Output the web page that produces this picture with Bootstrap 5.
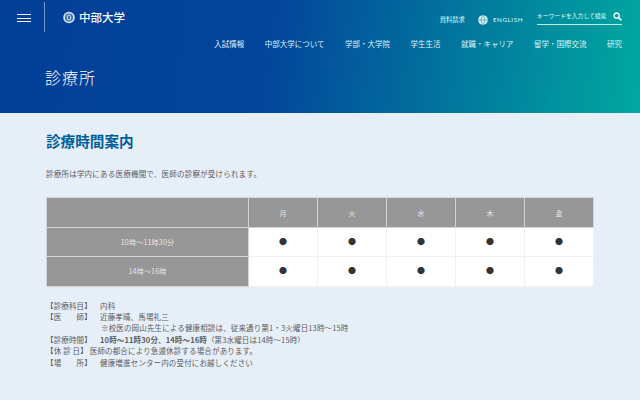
<!DOCTYPE html>
<html lang="ja">
<head>
  <meta charset="UTF-8" />
  <meta name="viewport" content="width=device-width, initial-scale=1.0"/>
  <title>診療所 – 中部大学</title>
  <link href="https://cdn.jsdelivr.net/npm/bootstrap@5.3.0/dist/css/bootstrap.min.css" rel="stylesheet" crossorigin="anonymous">
  <style>
    html, body { height:100%; }
    body {
      overflow:hidden;
      background:#e6eef8;
      color:#5c5c5c;
      font-family:"Noto Sans CJK JP", "Noto Sans", sans-serif;
      font-size:7.5px;
      line-height:11.4px;
      letter-spacing:.22px;
    }
    .site-head {
      height:113px;
      color:#fff;
      letter-spacing:0;
      background:linear-gradient(98deg, #023f98 0%, #03459b 42%, #00a8a0 100%);
    }
    .head-top { height:36px; }
    .burger { width:14px; margin:14px 0 0 17px; }
    .burger span { display:block; height:1px; background:#fff; margin-bottom:2.5px; }
    .head-rule { width:1px; height:30px; margin:2px 0 0 13px; background:rgba(255,255,255,.45); }
    .brand { margin:9px 0 0 18px; height:16px; font-size:11.5px; line-height:16px; font-weight:500; }
    .util { margin:7px 18px 0 0; font-size:6.3px; line-height:10px; color:#dff; }
    .util-item { margin-top:8px; }
    .util-en { font-family:"Lato", sans-serif; letter-spacing:.55px; margin-left:5px; }
    .util-globe { margin:8px 0 0 13px; }
    .search-box { width:85px; height:18px; padding-top:3px; border-bottom:1px solid #bfeee8; margin-left:14px; font-size:5.8px; line-height:12px; }
    .search-box svg { margin:2px 0 0; }
    .main-nav { margin-top:2px; padding-right:18px; gap:20.5px; font-size:7.5px; line-height:11px; color:#dff3f5; }
    .page-name { margin:16px 0 0 45px; font-size:16px; line-height:24px; letter-spacing:1px; font-weight:300; }
    .content { padding:18px 46px 0 46px; }
    .sec-title { margin:0; font-size:14.6px; line-height:20px; font-weight:700; color:#005d9c; letter-spacing:0; }
    .lead-text { margin:17px 0 18px; }
    .hours { table-layout:fixed; width:548px; margin:0 0 13px; border-collapse:collapse; font-size:7px; }
    .hours-label { width:202px; }
    .hours th, .hours td {
      height:29.4px; padding:0; text-align:center; vertical-align:middle;
      border:1px solid #d4d4d4; font-weight:400; line-height:10px;
    }
    .hours th { background:#979797; color:#e8e8e8; }
    .hours td { background:#fff; color:#333; font-size:8px; border-color:#f0f0f0; }
    .info-box { line-height:11.45px; letter-spacing:.15px; }
    .info-label { display:inline-block; width:54px; }
    .note-line { padding-left:55px; }
  </style>
</head>
<body>
  <header class="site-head d-flex flex-column">
    <div class="head-top d-flex">
      <div class="burger"><span></span><span></span><span></span></div>
      <div class="head-rule"></div>
      <div class="brand d-flex align-items-center gap-1">
        <svg width="12" height="13" viewBox="0 0 12 13">
          <circle cx="6" cy="6.5" r="5.8" fill="#cfe3f2"/>
          <circle cx="6" cy="6.5" r="4" fill="#3f6fae"/>
          <rect x="4.4" y="4.2" width="3.2" height="4.6" rx="1.2" fill="none" stroke="#e8f2fa" stroke-width="1"/>
        </svg>
        <span>中部大学</span>
      </div>
      <div class="util ms-auto d-flex align-items-start">
        <span class="util-item">資料請求</span>
        <svg class="util-globe" width="10" height="10" viewBox="0 0 10 10">
          <circle cx="5" cy="5" r="4.8" fill="#d7f0f0"/>
          <path d="M.5 5h9M5 .5c-2.4 2.6-2.4 6.4 0 9M5 .5c2.4 2.6 2.4 6.4 0 9" fill="none" stroke="#2a8fb0" stroke-width=".6"/>
        </svg>
        <span class="util-item util-en">ENGLISH</span>
        <div class="search-box d-flex justify-content-between">
          <span>キーワードを入力して検索</span>
          <svg width="9" height="9" viewBox="0 0 9 9">
            <circle cx="3.6" cy="3.6" r="2.6" fill="none" stroke="#fff" stroke-width="1.3"/>
            <path d="M5.6 5.6 8.4 8.4" stroke="#fff" stroke-width="1.5"/>
          </svg>
        </div>
      </div>
    </div>
    <nav class="main-nav d-flex justify-content-end">
      <span>入試情報</span>
      <span>中部大学について</span>
      <span>学部・大学院</span>
      <span>学生生活</span>
      <span>就職・キャリア</span>
      <span>留学・国際交流</span>
      <span>研究</span>
    </nav>
    <div class="page-name">診療所</div>
  </header>

  <main class="content">
    <h2 class="sec-title">診療時間案内</h2>
    <p class="lead-text">診療所は学内にある医療機関で、医師の診察が受けられます。</p>

    <table class="hours">
      <colgroup>
        <col class="hours-label"><col><col><col><col><col>
      </colgroup>
      <tbody>
        <tr><th></th><th>月</th><th>火</th><th>水</th><th>木</th><th>金</th></tr>
        <tr><th>10時～11時30分</th><td>●</td><td>●</td><td>●</td><td>●</td><td>●</td></tr>
        <tr><th>14時～16時</th><td>●</td><td>●</td><td>●</td><td>●</td><td>●</td></tr>
      </tbody>
    </table>

    <div class="info-box">
      <div><span class="info-label">【診療科目】</span>内科</div>
      <div><span class="info-label">【医　　師】</span>近藤孝晴、馬場礼三</div>
      <div class="note-line">※校医の岡山先生による健康相談は、従来通り第1・3火曜日13時～15時</div>
      <div><span class="info-label">【診療時間】</span><strong>10時～11時30分、14時～16時</strong>（第3水曜日は14時～15時）</div>
      <div>【休 診 日】 医師の都合により急遽休診する場合があります。</div>
      <div><span class="info-label">【場　　所】</span>健康増進センター内の受付にお越しください</div>
    </div>
  </main>

  <script src="https://cdn.jsdelivr.net/npm/bootstrap@5.3.0/dist/js/bootstrap.bundle.min.js" crossorigin="anonymous"></script>
</body>
</html>
